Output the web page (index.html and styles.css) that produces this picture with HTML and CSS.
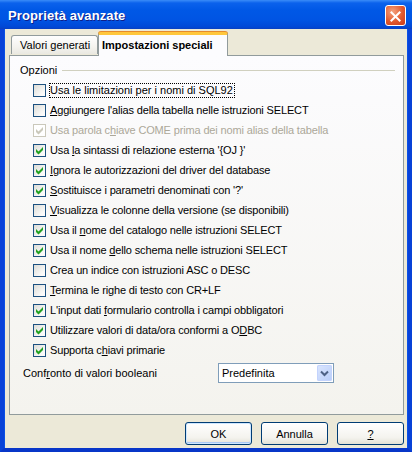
FILE: index.html
```html
<!DOCTYPE html>
<html>
  <head>
    <meta charset="utf-8" />
    <title>Proprietà avanzate</title>
    <link rel="stylesheet" href="styles.css">
  </head>
  <body>
    <div class="window">
      <div class="titlebar">
        <span class="title">Proprietà avanzate</span>
        <span class="close">
          <svg width="21" height="21" viewBox="0 0 21 21">
            <path d="M6 6 L15 15 M15 6 L6 15" stroke="#fff" stroke-width="2.2" stroke-linecap="square" fill="none" />
          </svg>
        </span>
      </div>

      <div class="client">
        <div class="tabs">
          <div class="tab">Valori generati</div>
          <div class="tab active">Impostazioni speciali</div>
        </div>

        <div class="panel">
          <div class="legend">
            <span>Opzioni</span>
            <span class="rule"></span>
          </div>

          <div class="options">
            <div class="option">
              <span class="box"></span>
              <span class="label focus">Usa le limitazioni per i nomi di SQL92</span>
            </div>
            <div class="option">
              <span class="box"></span>
              <span class="label"><u>A</u>ggiungere l'alias della tabella nelle istruzioni SELECT</span>
            </div>
            <div class="option disabled">
              <span class="box checked"><svg viewBox="0 0 11 11"><polygon points="2,4 4.5,6.5 9,2 9,5 4.5,9.5 2,7" /></svg></span>
              <span class="label">Usa parola c<u>h</u>iave COME prima dei nomi alias della tabella</span>
            </div>
            <div class="option">
              <span class="box checked"><svg viewBox="0 0 11 11"><polygon points="2,4 4.5,6.5 9,2 9,5 4.5,9.5 2,7" /></svg></span>
              <span class="label">Usa <u>l</u>a sintassi di relazione esterna '{OJ }'</span>
            </div>
            <div class="option">
              <span class="box checked"><svg viewBox="0 0 11 11"><polygon points="2,4 4.5,6.5 9,2 9,5 4.5,9.5 2,7" /></svg></span>
              <span class="label"><u>I</u>gnora le autorizzazioni del driver del database</span>
            </div>
            <div class="option">
              <span class="box checked"><svg viewBox="0 0 11 11"><polygon points="2,4 4.5,6.5 9,2 9,5 4.5,9.5 2,7" /></svg></span>
              <span class="label"><u>S</u>ostituisce i parametri denominati con '?'</span>
            </div>
            <div class="option">
              <span class="box"></span>
              <span class="label"><u>V</u>isualizza le colonne della versione (se disponibili)</span>
            </div>
            <div class="option">
              <span class="box checked"><svg viewBox="0 0 11 11"><polygon points="2,4 4.5,6.5 9,2 9,5 4.5,9.5 2,7" /></svg></span>
              <span class="label">Usa il <u>n</u>ome del catalogo nelle istruzioni SELECT</span>
            </div>
            <div class="option">
              <span class="box checked"><svg viewBox="0 0 11 11"><polygon points="2,4 4.5,6.5 9,2 9,5 4.5,9.5 2,7" /></svg></span>
              <span class="label">Usa il nome <u>d</u>ello schema nelle istruzioni SELECT</span>
            </div>
            <div class="option">
              <span class="box"></span>
              <span class="label">Crea un indice con istruzioni ASC o DESC</span>
            </div>
            <div class="option">
              <span class="box"></span>
              <span class="label"><u>T</u>ermina le righe di testo con CR+LF</span>
            </div>
            <div class="option">
              <span class="box checked"><svg viewBox="0 0 11 11"><polygon points="2,4 4.5,6.5 9,2 9,5 4.5,9.5 2,7" /></svg></span>
              <span class="label">L'input dati <u>f</u>ormulario controlla i campi obbligatori</span>
            </div>
            <div class="option">
              <span class="box checked"><svg viewBox="0 0 11 11"><polygon points="2,4 4.5,6.5 9,2 9,5 4.5,9.5 2,7" /></svg></span>
              <span class="label">Utilizzare valori di data/ora conformi a O<u>D</u>BC</span>
            </div>
            <div class="option">
              <span class="box checked"><svg viewBox="0 0 11 11"><polygon points="2,4 4.5,6.5 9,2 9,5 4.5,9.5 2,7" /></svg></span>
              <span class="label">Supporta c<u>h</u>iavi primarie</span>
            </div>
          </div>

          <div class="compare">
            <span class="compare-label">Conf<u>r</u>onto di valori booleani</span>
            <div class="select">
              <span class="select-value">Predefinita</span>
              <span class="select-button">
                <svg width="15" height="16" viewBox="0 0 15 16">
                  <path d="M4 6.5 L7.5 10 L11 6.5" stroke="#4d6185" stroke-width="2" fill="none" />
                </svg>
              </span>
            </div>
          </div>
        </div>

        <div class="buttons">
          <button class="btn default">OK</button>
          <button class="btn">Annulla</button>
          <button class="btn"><u>?</u></button>
        </div>
      </div>
    </div>
  </body>
</html>
```

FILE: styles.css
```css
body {
  margin: 0;
  font: 11px 'Liberation Sans', Arial, sans-serif;
  color: #000;
  background-color: #fff;
}
.window {
  width: 412px;
  height: 452px;
  display: flex;
  flex-direction: column;
}

/* blue caption */
.titlebar {
  height: 29px;
  flex: none;
  display: flex;
  align-items: center;
  justify-content: space-between;
  padding: 0 6px 0 8px;
  box-sizing: border-box;
  background: linear-gradient(#3a8cf8 0, #0b62ec 3px, #0058e6 10px, #0054e3 20px, #0148d6 27px, #0a3fc0 29px);
}
.title {
  color: #fff;
  font: bold 13px 'Liberation Sans', Arial, sans-serif;
  letter-spacing: 0.1px;
  text-shadow: 1px 1px #0f1f8a;
  margin-top: 1px;
}
.close {
  width: 21px;
  height: 21px;
  box-sizing: border-box;
  border: 1px solid #fff;
  border-radius: 3px;
  background: radial-gradient(circle at 35% 30%, #f4a27e 0, #e2592e 55%, #c8391a 100%);
  display: flex;
  margin-top: 1px;
}

/* window body with the blue frame */
.client {
  flex: 1;
  display: flex;
  flex-direction: column;
  background-color: #ece9d8;
  border-left: 4px solid #0842d8;
  border-right: 4px solid #0842d8;
  border-bottom: 4px solid #0836c8;
  box-shadow: inset 1px 0 #0a50e6, inset -1px 0 #0a50e6;
}

/* tab strip */
.tabs {
  display: flex;
  align-items: flex-end;
  height: 23px;
  margin-top: 3px;
  padding-left: 7px;
  position: relative;
  z-index: 1;
}
.tab {
  height: 19px;
  line-height: 18px;
  padding: 0 0 0 8px;
  white-space: nowrap;
  border: 1px solid #919b9c;
  border-bottom: none;
  border-radius: 3px 3px 0 0;
  background: linear-gradient(#fefefe, #f4f3ee 60%, #e9e8e1);
  box-sizing: border-box;
  width: 87px;
  margin-bottom: 1px;
}
.tab.active {
  width: 130px;
  height: 24px;
  line-height: 21px;
  margin-bottom: -1px;
  padding: 0 0 0 3px;
  font-weight: bold;
  background: #fcfcfe;
  border-top: 3px solid #ffc73c;
  box-shadow: 0 -1px #e68b2c;
}

.panel {
  margin: 0 4px 0 5px;
  height: 360px;
  box-sizing: border-box;
  border: 1px solid #919b9c;
  background: linear-gradient(#fcfcfe, #f4f3ee);
  padding: 7px 0 0 0;
}

/* Opzioni group */
.legend {
  display: flex;
  align-items: center;
  height: 14px;
  padding-left: 10px;
  padding-right: 8px;
}
.rule {
  flex: 1;
  height: 1px;
  margin-left: 5px;
  background-color: #d0d0bf;
}
.options {
  margin-top: 3px;
  padding-left: 23px;
}
.option {
  height: 20px;
  display: flex;
  align-items: center;
}
.box {
  width: 13px;
  height: 13px;
  box-sizing: border-box;
  border: 1px solid #1c5180;
  background: linear-gradient(135deg, #dcdcd7, #fbfbfa 80%);
  margin-right: 3px;
  flex: none;
}
.box svg {
  display: block;
  width: 11px;
  height: 11px;
  fill: #21a121;
}
.label {
  border: 1px dotted transparent;
  padding: 0 1px 0 0;
  line-height: 13px;
  letter-spacing: -0.15px;
  white-space: nowrap;
}
.label.focus {
  border-color: #000;
  letter-spacing: 0;
}
.disabled .box {
  border-color: #cac8bb;
  background: #fff;
}
.disabled .box svg {
  fill: #cac8bb;
}
.disabled .label {
  color: #aca899;
}

/* boolean comparison dropdown */
.compare {
  display: flex;
  align-items: center;
  margin-top: 3px;
  padding-left: 13px;
}
.compare-label {
  width: 195px;
}
.select {
  width: 116px;
  height: 20px;
  box-sizing: border-box;
  border: 1px solid #7f9db9;
  background-color: #fff;
  display: flex;
  align-items: center;
  justify-content: space-between;
  padding: 1px;
}
.select-value {
  padding-left: 2px;
}
.select-button {
  width: 15px;
  height: 16px;
  border-radius: 2px;
  background: linear-gradient(135deg, #dbe6fe, #b8cdf9);
  box-shadow: inset 0 0 0 1px #c3d3fd;
  display: flex;
}

/* dialog buttons */
.buttons {
  display: flex;
  justify-content: flex-end;
  gap: 9px;
  margin-top: 7px;
  padding-right: 4px;
}
.btn {
  width: 67px;
  height: 23px;
  border: 1px solid #003c74;
  border-radius: 3px;
  background: linear-gradient(#fff, #f4f3ee 70%, #e3e1d6);
  font: 11px 'Liberation Sans', Arial, sans-serif;
  color: #000;
  padding: 0;
}
.btn.default {
  box-shadow: inset 0 0 0 1px #cee7ff, inset 0 -1px 0 1px #a9c8f5;
}
```
